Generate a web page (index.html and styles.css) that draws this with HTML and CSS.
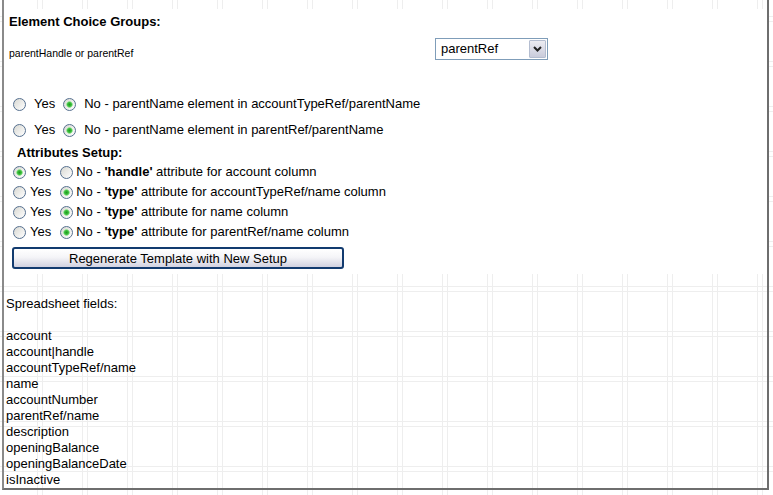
FILE: index.html
```html
<!DOCTYPE html>
<html lang="en">
<head>
    <meta charset="UTF-8">
    <title>Template Setup</title>
    <link rel="stylesheet" href="styles.css">
</head>
<body>
    <div class="panel">
        <form class="setup">
            <h3>Element Choice Groups:</h3>

            <div class="choice-group">
                <span class="choice-label">parentHandle or parentRef</span>
                <div class="select">
                    <span class="select-value">parentRef</span>
                    <span class="select-arrow">
                        <svg width="9" height="6" viewBox="0 0 9 6"><path d="M1 1 L4.5 4.5 L8 1" fill="none" stroke="#222" stroke-width="2"/></svg>
                    </span>
                </div>
            </div>

            <div class="elem-rows">
                <div class="elem-row">
                    <input type="radio" name="el1"><label>Yes</label>
                    <input type="radio" name="el1" checked><label>No - parentName element in accountTypeRef/parentName</label>
                </div>
                <div class="elem-row">
                    <input type="radio" name="el2"><label>Yes</label>
                    <input type="radio" name="el2" checked><label>No - parentName element in parentRef/parentName</label>
                </div>
            </div>

            <h4>Attributes Setup:</h4>

            <div class="attr-row">
                <input type="radio" name="at1" checked><label>Yes</label>
                <input type="radio" name="at1"><label>No - <b>'handle'</b> attribute for account column</label>
            </div>
            <div class="attr-row">
                <input type="radio" name="at2"><label>Yes</label>
                <input type="radio" name="at2" checked><label>No - <b>'type'</b> attribute for accountTypeRef/name column</label>
            </div>
            <div class="attr-row">
                <input type="radio" name="at3"><label>Yes</label>
                <input type="radio" name="at3" checked><label>No - <b>'type'</b> attribute for name column</label>
            </div>
            <div class="attr-row">
                <input type="radio" name="at4"><label>Yes</label>
                <input type="radio" name="at4" checked><label>No - <b>'type'</b> attribute for parentRef/name column</label>
            </div>

            <button type="button" class="btn-regen">Regenerate Template with New Setup</button>
        </form>

        <div class="fields">
            Spreadsheet fields:<br>
            <br>
            account<br>
            account|handle<br>
            accountTypeRef/name<br>
            name<br>
            accountNumber<br>
            parentRef/name<br>
            description<br>
            openingBalance<br>
            openingBalanceDate<br>
            isInactive
        </div>
    </div>
</body>
</html>
```

FILE: styles.css
```css
:root {
    --grid: #eeeeee;
    --frame: #6e6e6e;
    --text: #000;
}

body {
    margin: 0;
    font-family: "Liberation Sans", Arial, sans-serif;
    font-size: 13px;
    line-height: 16px;
    color: var(--text);
    background-color: white;
    background-image:
        linear-gradient(to right, var(--grid) 1px, transparent 1px),
        linear-gradient(to right, transparent 40px, var(--grid) 40px, var(--grid) 41px, transparent 41px),
        linear-gradient(to bottom, var(--grid) 1px, transparent 1px),
        linear-gradient(to bottom, transparent 40px, var(--grid) 40px, var(--grid) 41px, transparent 41px);
    background-size: 45px 45px;
    background-position: 42px 21px;
    height: 495px;
    overflow: hidden;
}

.panel {
    box-sizing: border-box;
    width: 767px;
    height: 490px;
    margin-left: 2px;
    padding-top: 9px;
    border-left: 2px solid #8a8a8a;
    border-right: 2px solid var(--frame);
    border-bottom: 2px solid var(--frame);
}

/* top part: white form */
.setup {
    margin: 0;
    padding: 5px 0 5px 5px;
    background: white;
}

.setup h3 {
    margin: 0;
    font-size: 13px;
    font-weight: bold;
    line-height: 16px;
}

.choice-group {
    display: grid;
    grid-template-columns: 426px auto;
    align-items: end;
    margin-top: 8px;
}

.choice-label {
    font-size: 10.5px;
    line-height: 12px;
    padding-bottom: 1px;
}

.select {
    display: flex;
    align-items: center;
    width: 111px;
    height: 20px;
    border: 1px solid #7f9db9;
    background: white;
}

.select-value {
    flex: 1;
    padding-left: 5px;
    font-size: 13px;
}

.select-arrow {
    display: flex;
    align-items: center;
    justify-content: center;
    width: 15px;
    height: 16px;
    margin-right: 1px;
    border: 1px solid #b4bdd0;
    border-radius: 1px;
    background: linear-gradient(#ececf2, #c9cbdb);
}

.elem-rows {
    margin-top: 34px;
}

.elem-row {
    display: flex;
    align-items: center;
    height: 20px;
    margin-bottom: 6px;
    padding-left: 4px;
}

.elem-row label {
    margin: 0 8px;
}

.setup h4 {
    margin: -1px 0 1px 8px;
    font-size: 13px;
    font-weight: bold;
    line-height: 16px;
}

.attr-row {
    display: flex;
    align-items: center;
    height: 20px;
    padding-left: 4px;
}

.attr-row label:first-of-type {
    margin: 0 9px 0 4px;
}

.attr-row label {
    margin-left: 3px;
}

input[type="radio"] {
    appearance: none;
    -webkit-appearance: none;
    width: 13px;
    height: 13px;
    margin: 0;
    border: 1px solid #56708f;
    border-radius: 50%;
    background: linear-gradient(135deg, #d8d8d2, #ffffff);
}

input[type="radio"]:checked {
    background:
        radial-gradient(circle, #1f9a1f 0, #3cbf3c 2px, #9ee49e 3px, transparent 3.6px),
        linear-gradient(135deg, #d8d8d2, #ffffff);
}

.btn-regen {
    display: block;
    width: 332px;
    height: 22px;
    margin: 5px 0 0 3px;
    padding: 0;
    border: 2px solid #123b6f;
    border-radius: 3px;
    background: linear-gradient(#ffffff 0%, #f5f5f8 45%, #d2d2e0 100%);
    font-family: "Liberation Sans", Arial, sans-serif;
    font-size: 13px;
    color: #000;
}

/* lower part: plain text over grid */
.fields {
    padding: 22px 0 0 2px;
}
```
